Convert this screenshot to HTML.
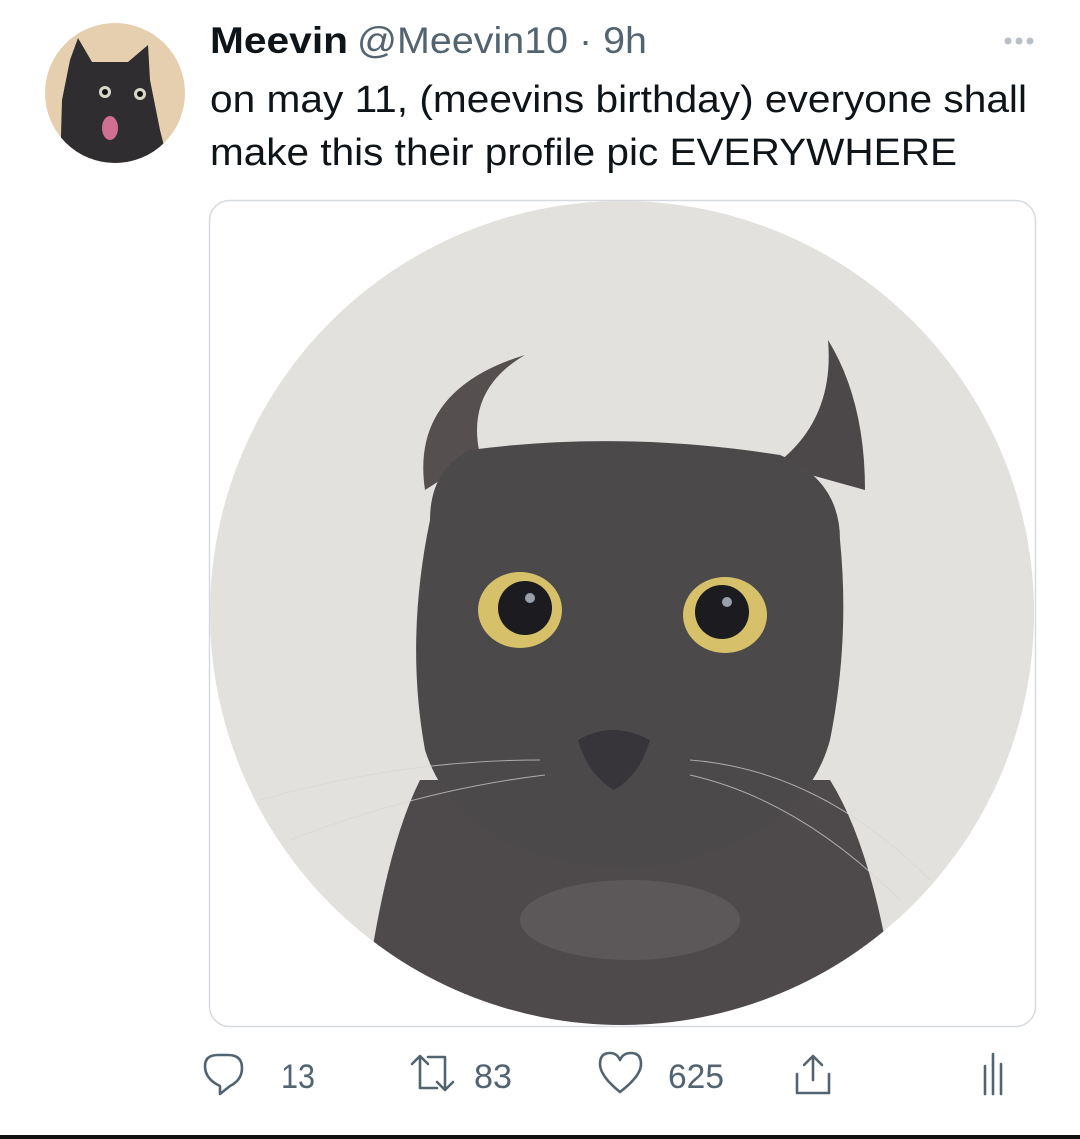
<!DOCTYPE html>
<html><head><meta charset="utf-8"><style>
html,body{margin:0;padding:0;background:#fff;width:1080px;height:1139px;overflow:hidden}
svg{display:block}
text{font-family:"Liberation Sans",sans-serif}
</style></head><body>
<svg width="1080" height="1139" viewBox="0 0 1080 1139" xmlns="http://www.w3.org/2000/svg">
<defs>
<clipPath id="av"><circle cx="115" cy="93" r="70"/></clipPath>
<clipPath id="big"><circle cx="622" cy="613" r="412"/></clipPath>
<clipPath id="box"><rect x="210" y="201" width="825" height="825" rx="20"/></clipPath>
</defs>
<rect width="1080" height="1139" fill="#fff"/>
<g clip-path="url(#av)">
<rect x="40" y="20" width="150" height="150" fill="#e6cfae"/>
<path d="M70 60 L78 38 L92 62 L128 62 L148 45 L150 80 L160 130 L170 170 L60 170 L62 100 Z" fill="#2f2d30"/>
<circle cx="105" cy="92" r="6" fill="#d8d8c8"/><circle cx="105" cy="92" r="3" fill="#111"/>
<circle cx="140" cy="94" r="6" fill="#d8d8c8"/><circle cx="140" cy="94" r="3" fill="#111"/>
<ellipse cx="110" cy="128" rx="8" ry="12" fill="#d07090"/>
</g>
<text x="210" y="53" font-size="37" fill="#0f1419" font-weight="bold" textLength="138" lengthAdjust="spacingAndGlyphs">Meevin</text>
<text x="357" y="53" font-size="37" fill="#536471" textLength="290" lengthAdjust="spacingAndGlyphs">@Meevin10 · 9h</text>
<g fill="#b8bfc6"><circle cx="1008" cy="41" r="3.5"/><circle cx="1019" cy="41" r="3.5"/><circle cx="1030" cy="41" r="3.5"/></g>
<text x="210" y="112" font-size="38" fill="#0f1419" textLength="817" lengthAdjust="spacingAndGlyphs">on may 11, (meevins birthday) everyone shall</text>
<text x="210" y="165" font-size="38" fill="#0f1419" textLength="747" lengthAdjust="spacingAndGlyphs">make this their profile pic EVERYWHERE</text>
<rect x="209.5" y="200.5" width="826" height="826" rx="20" fill="#fff" stroke="#d6dadf" stroke-width="1.5"/>
<g clip-path="url(#box)">
<g clip-path="url(#big)">
<rect x="200" y="190" width="850" height="850" fill="#e3e1de"/>
<path d="M420 780 Q380 860 360 1040 L900 1040 Q880 860 830 780 Z" fill="#4e4a4c"/>
<path d="M425 490 Q410 390 525 355 Q465 390 480 455 Z" fill="#55504f"/>
<path d="M775 465 Q835 420 828 340 Q865 400 865 490 Z" fill="#4c4849"/>
<path d="M430 520 Q430 470 470 450 Q620 430 780 455 Q840 480 840 540 Q850 640 830 740 Q800 850 630 870 Q460 860 425 750 Q405 640 430 520 Z" fill="#4c494b"/>
<ellipse cx="630" cy="920" rx="110" ry="40" fill="#5c585a"/>
<ellipse cx="520" cy="610" rx="42" ry="38" fill="#d6c06a"/>
<circle cx="525" cy="608" r="27" fill="#1b1b20"/>
<circle cx="530" cy="598" r="5" fill="#9aa0aa"/>
<ellipse cx="725" cy="615" rx="42" ry="38" fill="#d6c06a"/>
<circle cx="722" cy="612" r="27" fill="#1b1b20"/>
<circle cx="727" cy="602" r="5" fill="#9aa0aa"/>
<path d="M578 740 Q612 720 650 740 Q640 775 614 790 Q588 775 578 740 Z" fill="#38353a"/>
<g stroke="#d9d6d4" stroke-width="1" fill="none" opacity="0.7">
<path d="M540 760 Q400 760 260 800"/><path d="M545 775 Q420 790 290 840"/>
<path d="M690 760 Q820 770 930 880"/><path d="M690 775 Q800 800 900 900"/>
</g>
</g>
</g>
<g fill="none" stroke="#536471" stroke-width="2.6" stroke-linecap="round" stroke-linejoin="round">
<path d="M220 1086 Q205 1079 205 1066 Q205 1055 218 1055 L228 1055 Q242 1055 242 1068 Q242 1080 230 1086 L220 1094 Z"/>
<path d="M412 1064 L420 1056 L428 1064 M420 1057 L420 1088 L437 1088 M428 1057 L445 1057 L445 1090 M437 1082 L445 1090 L453 1082"/>
<path d="M620 1092 Q600 1076 600 1064 Q600 1053 610 1053 Q617 1053 620 1060 Q623 1053 631 1053 Q641 1053 641 1064 Q641 1076 620 1092 Z"/>
<path d="M813 1056 L813 1080 M804 1065 L813 1056 L822 1065 M797 1074 L797 1093 L829 1093 L829 1074"/>
<path d="M985 1066 L985 1094 M993 1054 L993 1094 M1001 1064 L1001 1094"/>
</g>
<g font-size="34" fill="#536471">
<text x="281" y="1088" textLength="34" lengthAdjust="spacingAndGlyphs">13</text>
<text x="474" y="1088" textLength="38" lengthAdjust="spacingAndGlyphs">83</text>
<text x="668" y="1088" textLength="56" lengthAdjust="spacingAndGlyphs">625</text>
</g>
<rect x="0" y="1135" width="1080" height="4" fill="#111"/>
</svg>
</body></html>
